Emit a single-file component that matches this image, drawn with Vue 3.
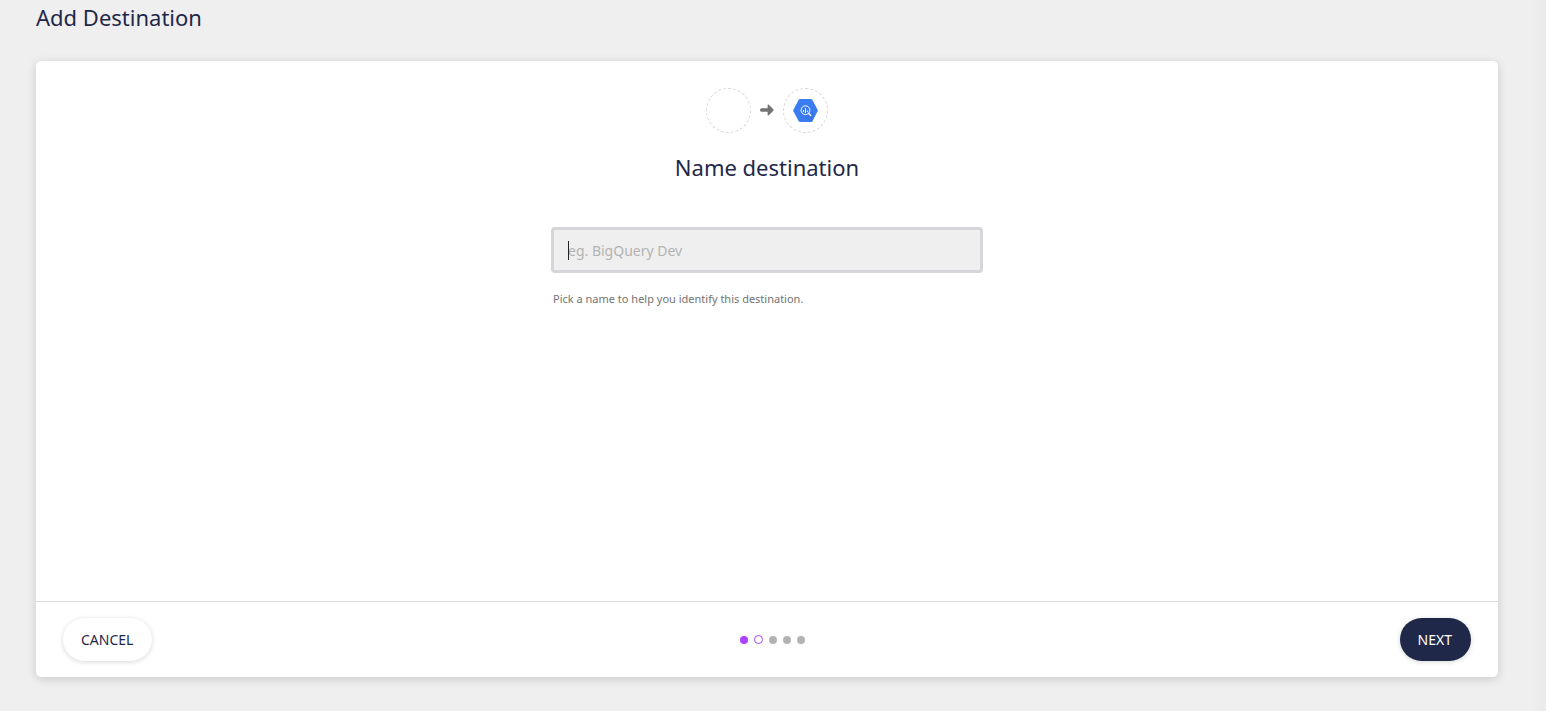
<script setup>
import { ref } from 'vue'

const name = ref('')
const steps = ['done', 'current', 'todo', 'todo', 'todo']
</script>

<template>
  <div class="page">
    <h1 class="title">Add Destination</h1>
    <main class="card">
      <section class="content">
        <div class="route">
          <span class="node"></span>
          <svg class="arrow" width="14" height="13" viewBox="0 0 14 13" aria-hidden="true">
            <path d="M1.6 4.3H7.6V1.3Q7.8.2 8.8.8L13.3 5.3Q13.8 6 13.3 6.7L8.8 11.2Q7.8 11.8 7.6 10.7V7.7H1.6Q.2 7.6.1 6.4V5.6Q.2 4.4 1.6 4.3Z" fill="#737373" />
          </svg>
          <span class="node">
            <svg width="25" height="23" viewBox="0.5 0.5 25 23" aria-label="BigQuery" role="img">
              <path d="M7.6.5H18.4Q19.3.5 19.8 1.3L25.1 11.2Q25.5 12 25.1 12.8L19.8 22.7Q19.3 23.5 18.4 23.5H7.6Q6.7 23.5 6.2 22.7L.9 12.8Q.5 12 .9 11.2L6.2 1.3Q6.7.5 7.6.5Z" fill="#3b7df1" />
              <path d="M16.4 9L22.6 15.8 19.8 22.7Q19.3 23.5 18.4 23.5H17.7L9.8 15.4Z" fill="#3875e6" />
              <circle cx="13" cy="11.7" r="4.4" fill="#3b7df1" stroke="#fff" stroke-width="1" />
              <path d="M11 11.6V13.4M13 9.8V14.4M15 12.2V13.4" stroke="#fff" stroke-width="1" />
              <path d="M16.3 15L18.2 16.9" stroke="#fff" stroke-width="1.4" stroke-linecap="round" />
            </svg>
          </span>
        </div>
        <h2 class="heading">Name destination</h2>
        <div class="field">
          <div class="box">
            <input id="destination-name" v-model="name" type="text" placeholder="eg. BigQuery Dev" aria-label="Name destination" aria-describedby="name-hint" />
            <span v-if="!name" class="caret"></span>
          </div>
          <p id="name-hint" class="hint">Pick a name to help you identify this destination.</p>
        </div>
      </section>
      <footer class="footer">
        <div class="side"><button type="button" class="btn">CANCEL</button></div>
        <div class="steps">
          <span v-for="(s, i) in steps" :key="i" class="dot" :class="s"></span>
        </div>
        <div class="side end"><button type="button" class="btn primary">NEXT</button></div>
      </footer>
    </main>
  </div>
</template>

<style>
body {
  background: #efefef;
}
</style>

<style scoped>
.page {
  box-sizing: border-box;
  min-height: 100vh;
  display: flex;
  flex-direction: column;
  padding: 2px 48px 34px 36px;
  font-family: "Noto Sans", "Open Sans", sans-serif;
  color: #1f2849;
  background: linear-gradient(to left, #eaeaea, #efefef 14px);
}
.title,
.heading {
  margin: 0;
  font-size: 22px;
  line-height: 30px;
  font-weight: 400;
}
.card {
  flex: 1;
  display: flex;
  flex-direction: column;
  margin-top: 29px;
  background: #fff;
  border-radius: 5px;
  box-shadow: 0 2px 10px rgba(0, 0, 0, 0.16);
}
.content {
  flex: 1;
  display: flex;
  flex-direction: column;
  align-items: center;
  padding: 27px 24px;
}
.route {
  display: flex;
  align-items: center;
  gap: 9px;
}
.node {
  box-sizing: border-box;
  width: 45px;
  height: 45px;
  display: flex;
  align-items: center;
  justify-content: center;
  border: 1px dashed #d6d6d6;
  border-radius: 50%;
}
.heading {
  margin-top: 19px;
}
.field {
  width: 432px;
  max-width: 100%;
  margin-top: 45px;
}
.box {
  position: relative;
}
input {
  box-sizing: border-box;
  display: block;
  width: 100%;
  height: 46px;
  padding: 0 14px;
  border: 3px solid #d5d5da;
  border-radius: 4px;
  outline: 0;
  background: #efefef;
  color: #1f2849;
  font-family: inherit;
  font-size: 14px;
}
input::placeholder {
  color: #b3b3b3;
  opacity: 1;
}
.caret {
  position: absolute;
  left: 17px;
  top: 14px;
  width: 1px;
  height: 19px;
  background: #222;
}
input:focus + .caret {
  display: none;
}
.hint {
  margin: 18px 2px 0;
  font-size: 11px;
  line-height: 16px;
  color: #737373;
}
.footer {
  display: flex;
  align-items: center;
  padding: 16px 27px;
  border-top: 1px solid #d9dadb;
}
.side {
  flex: 1;
  display: flex;
}
.end {
  justify-content: flex-end;
}
.btn {
  height: 43px;
  padding: 0 19px 0 18px;
  border: 0;
  border-radius: 22px;
  background: #fff;
  color: #1f2849;
  font-family: inherit;
  font-size: 14px;
  box-shadow: 0 1px 5px rgba(0, 0, 0, 0.16);
}
.primary {
  background: #1f2849;
  color: #fff;
}
.steps {
  display: flex;
  align-items: center;
  gap: 6px;
  margin-left: 10px;
}
.dot {
  box-sizing: border-box;
  width: 8px;
  height: 8px;
  border-radius: 50%;
  background: #b3b3b3;
}
.done {
  background: #ad3ff5;
}
.current {
  width: 9px;
  height: 9px;
  border: 1px solid #ad3ff5;
  background: #fff;
}
</style>
